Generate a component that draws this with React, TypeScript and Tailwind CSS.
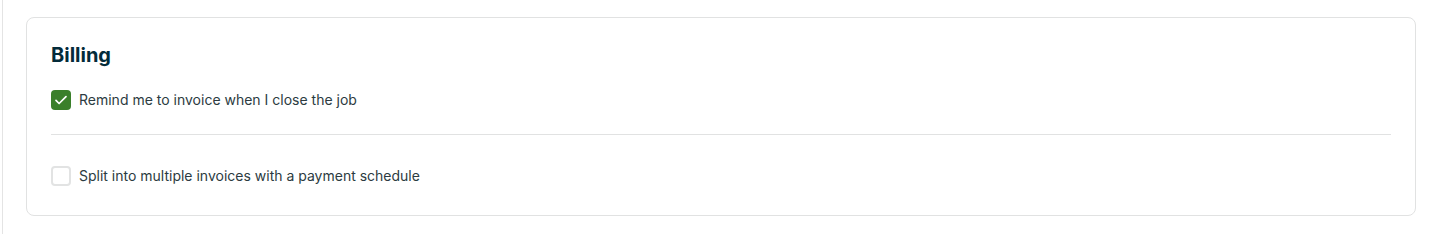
import { useState } from 'react';

function Check({ checked, onToggle }: { checked: boolean; onToggle: () => void }) {
  return (
    <button
      type="button"
      onClick={onToggle}
      className={
        checked
          ? 'w-5 h-5 rounded-[4px] bg-[#3a7f2a] flex items-center justify-center shrink-0'
          : 'w-5 h-5 rounded-[4px] border-2 border-[#e2e3e3] bg-white shrink-0'
      }
    >
      {checked && (
        <svg width="20" height="20" viewBox="0 0 20 20" fill="none">
          <path d="M5 10.4 8.1 13.5 15 6.6" stroke="white" strokeWidth="1.7" strokeLinecap="round" strokeLinejoin="round" />
        </svg>
      )}
    </button>
  );
}

export default function App() {
  const [remind, setRemind] = useState(true);
  const [split, setSplit] = useState(false);

  return (
    <div className="w-[1439px] h-[234px] bg-white" style={{ fontFamily: 'Inter, "Liberation Sans", sans-serif' }}>
      <div className="ml-[2px] h-full border-l border-[#e4e4e4] pl-[23px] pr-[23px] pt-[17px]">
        <div className="border border-[#e1e2e2] rounded-lg px-6 pt-6 pb-[29px]">
          <h2 className="text-xl leading-6 font-bold text-[#032b3a] pt-[1px] pb-[3px]">Billing</h2>
          <label className="mt-5 flex items-center gap-2 h-5 cursor-pointer">
            <Check checked={remind} onToggle={() => setRemind(!remind)} />
            <span className="text-sm text-[#2c3b41]">Remind me to invoice when I close the job</span>
          </label>
          <div className="mt-6 border-t border-[#e1e2e2]" />
          <label className="mt-[31px] flex items-center gap-2 h-5 cursor-pointer">
            <Check checked={split} onToggle={() => setSplit(!split)} />
            <span className="text-sm text-[#2c3b41]">Split into multiple invoices with a payment schedule</span>
          </label>
        </div>
      </div>
    </div>
  );
}
